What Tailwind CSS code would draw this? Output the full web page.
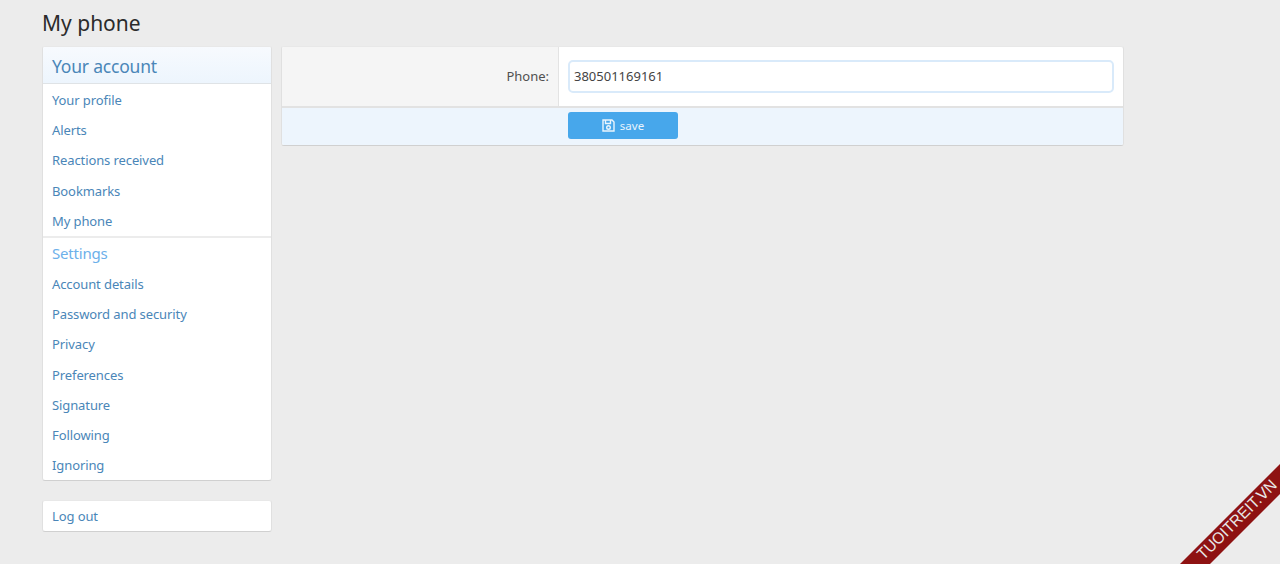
<!DOCTYPE html>
<html>
<head>
<meta charset="utf-8">
<script src="https://cdn.jsdelivr.net/npm/@tailwindcss/browser@4"></script>
</head>
<body class="m-0 h-[564px] w-[1280px] overflow-hidden relative bg-[#ececec] font-['Noto_Sans',sans-serif] text-[14px] text-[#333]">
<div class="pl-[42px] w-[1124px]">
  <h1 class="h-[46px] pt-[9px] text-[21px] leading-[28px] font-normal text-[#2b2b2b]">My phone</h1>
  <div class="flex gap-[9px] items-start">
    <div class="w-[230px] shrink-0">
      <div class="h-[435px] bg-white rounded-[3px] border border-[#e0e0e0] border-b-[#d0d0d0] border-t-[#e8e8e8] overflow-hidden text-[13px] tracking-[-0.1px] text-[#4a86b8]">
        <div class="h-[37.4px] flex items-center pt-[2px] px-[9px] text-[17.5px] tracking-[-0.2px] text-[#4a86b8] bg-gradient-to-b from-[#f7fafe] to-[#edf5fd] border-b border-[#dfe3e6]">Your account</div>
        <div class="h-[30.25px] flex items-center pt-[2px] px-[9px]">Your profile</div>
        <div class="h-[30.25px] flex items-center pt-[2px] px-[9px]">Alerts</div>
        <div class="h-[30.25px] flex items-center pt-[2px] px-[9px]">Reactions received</div>
        <div class="h-[30.25px] flex items-center pt-[2px] px-[9px]">Bookmarks</div>
        <div class="h-[30.25px] flex items-center pt-[2px] px-[9px]">My phone</div>
        <div class="h-[32.9px] flex items-center px-[9px] text-[15px] tracking-[-0.2px] text-[#6cb0ea] border-t-2 border-[#ececec]">Settings</div>
        <div class="h-[30.25px] flex items-center pt-[2px] px-[9px]">Account details</div>
        <div class="h-[30.25px] flex items-center pt-[2px] px-[9px]">Password and security</div>
        <div class="h-[30.25px] flex items-center pt-[2px] px-[9px]">Privacy</div>
        <div class="h-[30.25px] flex items-center pt-[2px] px-[9px]">Preferences</div>
        <div class="h-[30.25px] flex items-center pt-[2px] px-[9px]">Signature</div>
        <div class="h-[30.25px] flex items-center pt-[2px] px-[9px]">Following</div>
        <div class="h-[30.25px] flex items-center pt-[2px] px-[9px]">Ignoring</div>
      </div>
      <div class="mt-[19px] h-[32px] flex items-center pt-[2px] px-[9px] bg-white rounded-[3px] border border-[#e0e0e0] border-b-[#d0d0d0] border-t-[#e8e8e8] text-[13px] tracking-[-0.1px] text-[#4a86b8]">Log out</div>
    </div>
    <div class="flex-1 h-[100px] bg-white rounded-[3px] border border-[#e0e0e0] border-b-[#d0d0d0] border-t-[#e8e8e8] overflow-hidden">
      <div class="flex h-[61px] border-b-2 border-[#e2e2e2]">
        <div class="w-[277px] shrink-0 bg-[#f5f5f5] border-r border-[#e3e3e3] flex items-center justify-end pr-[9px] text-[13px] text-[#505050]">Phone:</div>
        <div class="flex-1 flex items-center pl-[9px] pr-[9px]">
          <div class="w-full h-[33px] flex items-center px-[4px] bg-white border-2 border-[#d9eafa] rounded-[5px] text-[13px] text-[#444]">380501169161</div>
        </div>
      </div>
      <div class="h-[37px] bg-[#edf5fd] pl-[286px] pt-[4px]">
        <div class="w-[110px] h-[27px] rounded-[3px] bg-[#47a7eb] flex items-center justify-center gap-[5px] text-[11.5px] text-[#e9f4fd]">
          <svg width="13" height="13" viewBox="0 0 13 13" fill="none" stroke="#eaf5fd" stroke-width="1.4"><path d="M1 1h9l2 2v9H1z"/><path d="M3.5 1v3.5h5V1"/><circle cx="6.5" cy="8.5" r="1.8"/></svg>
          <span>save</span>
        </div>
      </div>
    </div>
  </div>
</div>
<svg class="absolute right-0 bottom-0" width="110" height="110" viewBox="0 0 110 110">
  <polygon points="10,110 110,10 110,40 40,110" fill="#8e1212"/>
  <text x="0" y="0" transform="translate(33.5,106.5) rotate(-45)" font-family="Liberation Sans, sans-serif" font-size="16" fill="#e8e8e8" textLength="105" lengthAdjust="spacingAndGlyphs">TUOITREIT.VN</text>
</svg>
</body>
</html>
